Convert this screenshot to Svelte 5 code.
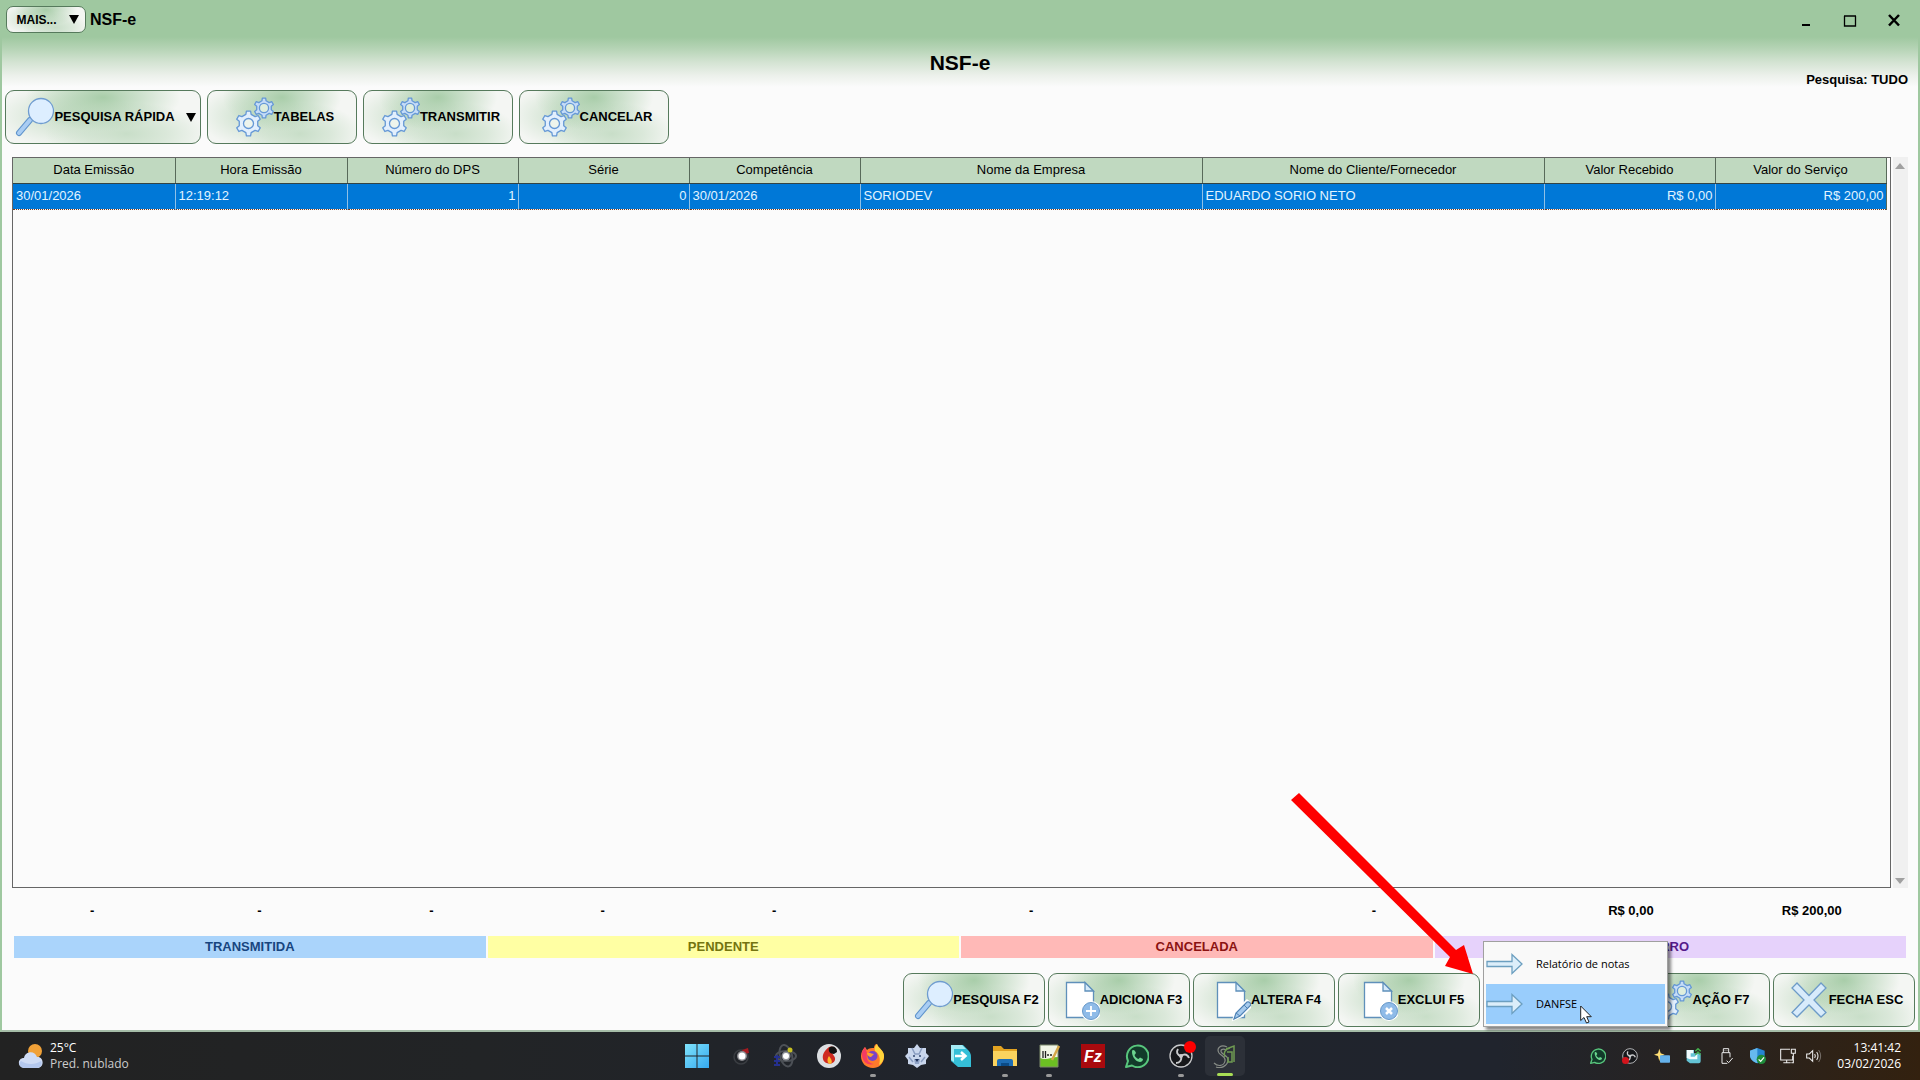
<script>
  const columns = [
    { title: 'Data Emissão', width: 162, value: '30/01/2026', total: '-' },
    { title: 'Hora Emissão', width: 172, value: '12:19:12', total: '-' },
    { title: 'Número do DPS', width: 171, value: '1', total: '-', right: true },
    { title: 'Série', width: 171, value: '0', total: '-', right: true },
    { title: 'Competência', width: 171, value: '30/01/2026', total: '-' },
    { title: 'Nome da Empresa', width: 342, value: 'SORIODEV', total: '-' },
    { title: 'Nome do Cliente/Fornecedor', width: 342, value: 'EDUARDO SORIO NETO', total: '-' },
    { title: 'Valor Recebido', width: 171, value: 'R$ 0,00', total: 'R$ 0,00', right: true },
    { title: 'Valor do Serviço', width: 171, value: 'R$ 200,00', total: 'R$ 200,00', right: true }
  ];

  const states = [
    { label: 'TRANSMITIDA', kind: 'sent' },
    { label: 'PENDENTE', kind: 'pending' },
    { label: 'CANCELADA', kind: 'cancelled' },
    { label: 'ERRO', kind: 'error' }
  ];

  const tools = ['TABELAS', 'TRANSMITIR', 'CANCELAR'];

  const actions = [
    { label: 'PESQUISA F2', icon: 'search' },
    { label: 'ADICIONA F3', icon: 'add' },
    { label: 'ALTERA F4', icon: 'edit' },
    { label: 'EXCLUI F5', icon: 'remove' },
    { label: '', icon: 'menu' },
    { label: 'AÇÃO F7', icon: 'gears' },
    { label: 'FECHA ESC', icon: 'close' }
  ];

  const menu = [
    { label: 'Relatório de notas', active: false },
    { label: 'DANFSE', active: true }
  ];

  const apps = [
    { id: 'start', name: 'Iniciar' },
    { id: 'atom', name: 'Átomo' },
    { id: 'orbit', name: 'Órbita' },
    { id: 'flame', name: 'Chama' },
    { id: 'firefox', name: 'Firefox', running: true },
    { id: 'bear', name: 'Urso' },
    { id: 'remote', name: 'Acesso remoto' },
    { id: 'files', name: 'Arquivos', running: true },
    { id: 'editor', name: 'Editor', running: true },
    { id: 'filezilla', name: 'FileZilla' },
    { id: 'whatsapp', name: 'WhatsApp' },
    { id: 'obs', name: 'OBS', running: true },
    { id: 'sg', name: 'Gestão', active: true }
  ];

  const tray = ['whatsapp', 'obs', 'star', 'sync', 'usb', 'shield', 'network', 'volume'];

  // Outline of a cog: each tooth is a short plateau on the outer radius.
  function gear(cx, cy, outer, inner, teeth) {
    const step = (Math.PI * 2) / teeth;
    const points = [];
    for (let i = 0; i < teeth; i++) {
      const mid = i * step - Math.PI / 2;
      for (const [offset, radius] of [[-0.27, inner], [-0.16, outer], [0.16, outer], [0.27, inner]]) {
        const a = mid + offset * step;
        points.push(`${(cx + Math.cos(a) * radius).toFixed(2)} ${(cy + Math.sin(a) * radius).toFixed(2)}`);
      }
    }
    return `M${points.join('L')}Z`;
  }

  const bigGear = gear(18.5, 28.5, 12.5, 9.5, 6);
  const smallGear = gear(34, 13, 10, 7.5, 6);
  const totalTracks = columns.map((c, i) => `minmax(0, ${i === columns.length - 1 ? 190 : c.width}fr)`).join(' ');
</script>

{#snippet icon(name)}
  <svg class="icon" viewBox="0 0 44 44" aria-hidden="true">
    {#if name === 'search'}
      <path d="M20 25 L9 38" stroke="#5f93cc" stroke-width="6" stroke-linecap="round" />
      <path d="M20 25 L9 38" stroke="#a9cdf3" stroke-width="4" stroke-linecap="round" />
      <circle cx="31" cy="16" r="12.5" fill="#ddeeff" stroke="#6f9cd0" stroke-width="1.3" />
    {:else if name === 'gears'}
      <path d={smallGear} fill="#c5dcf8" stroke="#6598d6" stroke-width="1.3" stroke-linejoin="round" />
      <circle cx="34" cy="13" r="4.6" fill="#dfeedd" stroke="#6598d6" stroke-width="1.3" />
      <path d={bigGear} fill="#e2effd" stroke="#6598d6" stroke-width="1.3" stroke-linejoin="round" />
      <circle cx="18.5" cy="28.5" r="5" fill="#eef4ec" stroke="#6598d6" stroke-width="1.3" />
    {:else if name === 'close'}
      <path d="M12 5 L24 17.5 L36 5 L41 10 L29 22 L41 34.500 L36 39 L24 27 L12 39 L7 34.500 L19 22 L7 10 Z" fill="#d8ebfb" stroke="#6d9bc8" stroke-width="1.3" />
    {:else}
      <path d="M10.500 4.500 H29 L37.500 13 V39.500 H10.500 Z" fill="#fff" stroke="#5f90ba" stroke-width="1.3" />
      <path d="M29 4.500 V13 H37.500 Z" fill="#d6eafa" stroke="#5f90ba" stroke-width="1.3" />
      {#if name === 'edit'}
        <path d="M27 41 L29 34 L40 23 L45 27 L34 38 Z" fill="#fff" stroke="#fff" stroke-width="3" />
        <path d="M27 41 L29 35 L40 24 Q43 23 44 27 L33 38 Z" fill="#a7cbee" stroke="#4f83b5" stroke-width="1.2" />
        <path d="M29 35 L33 38 M37 27 L41 31" stroke="#4f83b5" />
      {:else}
        <circle cx="35" cy="33" r="10" fill="#fff" />
        <circle cx="35" cy="33" r="8.5" fill="#8fbbe8" stroke="#6799c9" />
        {#if name === 'add'}
          <path d="M35 28 V38 M30 33 H40" stroke="#fff" stroke-width="1.8" />
        {:else}
          <path d="M32 30 L38 36 M38 30 L32 36" stroke="#fff" stroke-width="2.5" />
        {/if}
      {/if}
    {/if}
  </svg>
{/snippet}

{#snippet glyph(id)}
  <svg class="glyph" viewBox="0 0 24 24" fill="none" aria-hidden="true">
    {#if id === 'start'}
      <defs>
        <linearGradient id="win" x1="0" y1="0" x2="1" y2="1" gradientUnits="objectBoundingBox">
          <stop offset="0" stop-color="#7fe3fb" /><stop offset="1" stop-color="#35a8f0" />
        </linearGradient>
      </defs>
      <path d="M0 0H11.500V11.500H0ZM12.500 0H24V11.500H12.500ZM0 12.500H11.500V24H0ZM12.500 12.500H24V24H12.500Z" fill="url(#win)" />
    {:else if id === 'atom'}
      <circle cx="12" cy="13" r="7" stroke="#3a3d42" stroke-width="1.5" />
      <path d="M13 6 L19 4 L20 9 L15 10Z" fill="#a51a20" />
      <circle cx="13" cy="12" r="5" fill="#8b8b90" /><circle cx="13" cy="12" r="3.500" fill="#fff" />
    {:else if id === 'orbit'}
      <ellipse cx="13" cy="12" rx="6" ry="11" stroke="#4c5056" stroke-width="2" transform="rotate(-15 12 12)" />
      <ellipse cx="13" cy="12" rx="10" ry="5" stroke="#4c5056" stroke-width="2" />
      <path d="M1 13H7M1 17H7M1 21H7M4 11V22" stroke="#25308e" stroke-width="2" />
      <circle cx="13" cy="12" r="4.500" fill="#8f9297" /><circle cx="13" cy="12" r="3" fill="#fff" />
      <circle cx="17" cy="6" r="2.500" fill="#c7c022" />
    {:else if id === 'flame'}
      <circle cx="12" cy="12" r="12" fill="#dcdfe2" />
      <path d="M12 3 C7 7 5 11 6 15 C7 20 16 22 18 16 C19 12 14 10 15 7 L20 6 C17 2 14 2 12 3Z" fill="#cf2a20" />
      <path d="M12 4 C15 1 20 3 20 8 L17 10 C13 10 11 7 12 4Z" fill="#111" />
      <path d="M12 12 C9 16 11 20 13 20 C16 19 15 16 12 12Z" fill="#ffb52b" />
    {:else if id === 'firefox'}
      <path d="M12 24 C5 24 0 19 0 12 C0 8 2 5 4 3 L6 6 C8 4 11 4 13 4 C13 2 14 0 16 0 C17 4 24 7 23 14 C22 20 18 24 12 24Z" fill="#ff7a2b" />
      <path d="M16 0 C17 4 24 7 23 13 C22 18 20 20 18 21 C20 15 18 9 14 7 C13 4 14 2 16 0Z" fill="#ffd43a" />
      <path d="M1 8 C0 18 7 22 13 20 C6 19 5 14 6 9 L4 3Z" fill="#f43b62" />
      <circle cx="11.500" cy="12" r="5" fill="#7a43c9" />
      <path d="M6 9 C9 8 11 10 13 10 L10 13 C8 13 6 11 6 9Z" fill="#ffa32b" />
    {:else if id === 'bear'}
      <path d="M12 0 L15 4 L21 4 L21 9 L24 12 L21 16 L21 20 L16 21 L12 24 L8 21 L3 20 L3 16 L0 12 L3 9 L3 4 L9 4Z" fill="#c9d6ec" />
      <path d="M7 4 L10 10 H14 L17 4 M4 13 L8 18 M20 13 L16 18" stroke="#8a9dc0" stroke-width="1.500" />
      <circle cx="9" cy="12" r="1" fill="#31466f" /><circle cx="15" cy="12" r="1" fill="#31466f" />
      <path d="M9 15H15L14 20H10Z" fill="#8fa3c6" /><path d="M10 15H14L12 18Z" fill="#20335c" />
    {:else if id === 'remote'}
      <path d="M2 1 H14 L18 5 Q22 8 22 13 V23 H9 L2 17Z" fill="#35bfd8" />
      <path d="M2 1 H13 L17 5 H5 V18 L2 16Z" fill="#a5ebf5" />
      <path d="M6 12H15M12 8 L16.500 12 L12 16" stroke="#fff" stroke-width="2.500" />
    {:else if id === 'files'}
      <path d="M0 2 H8 L11 5 H24 V22 H0Z" fill="#e3a321" /><path d="M0 7 H24 V22 H0Z" fill="#fbd35e" />
      <path d="M4 22 V17 Q4 15 6 15 H18 Q20 15 20 17 V22Z" fill="#1d6db5" /><path d="M8 22 V19 H16 V22Z" fill="#0b4b87" />
    {:else if id === 'editor'}
      <path d="M3 1 H21 V23 H3Z" fill="#f1f5e6" /><path d="M3 14 C9 17 14 13 21 13 V23 H3Z" fill="#6cc023" />
      <path d="M3 1 H21 V23 H3Z" stroke="#7c8a6a" /><path d="M6 7V14M8.500 7V14M10 11H12M13 11H15" stroke="#222" stroke-width="1.300" />
      <path d="M22 2 L15 16" stroke="#d6a747" stroke-width="2.500" />
    {:else if id === 'filezilla'}
      <rect width="24" height="24" fill="#a90a0e" />
      <text x="3" y="18" class="fz">Fz</text>
    {:else if id === 'whatsapp'}
      <path d="M1 23 L3 17 A10.800 10.800 0 1 1 7 21.500Z" fill="#123b2a" stroke="#58c67d" stroke-width="2" stroke-linejoin="round" />
      <path d="M7 8 C7 5 9 6 10 7 L11 9 L9.500 11 C10 13 12 14.500 13.500 15 L15 13.500 L18 15 C18 18 15 18.500 13 17.500 C10 16.500 7 12 7 8Z" fill="#6ad58e" />
    {:else if id === 'obs'}
      <circle cx="12" cy="12" r="11" fill="#17181b" stroke="#c9cacc" stroke-width="1.300" />
      <path d="M12 12 C8 11 7 8 9 5 M12 12 C16 9 19 11 20 14 M12 12 C13 16 11 19 7 19" stroke="#c9cacc" stroke-width="2" />
      <circle cx="12" cy="12" r="2" fill="#c9cacc" />
    {:else if id === 'sg'}
      <path d="M14 3 C8 0 3 4 6 9 C8 12 13 12 12 17 C11 22 5 23 1 19 M13 6 C10 4 6 6 9 9 C12 12 16 12 15 17 C14 22 8 25 3 23" stroke="#878c86" stroke-width="1.200" />
      <path d="M17 4 C12 5 10 9 12 13 M14 8 H19 V18 H15 V13 M13 5 L21 2 V18" stroke="#6f9a52" stroke-width="1.500" />
    {:else if id === 'star'}
      <path d="M8 1 L10 8 L16 10 L10 12 L8 20 L6 12 L0 10 L6 8Z" fill="#ffdf75" /><rect x="9" y="11" width="15" height="11" rx="1" fill="#65b1ea" />
    {:else if id === 'sync'}
      <path d="M1 3 H12 V8 H22 V20 Q22 23 19 23 H6 L1 19Z" fill="#64c3d5" /><path d="M1 3 H11 V8 H7 V13 H13 L17 9 V17 H6 L1 15Z" fill="#f2fbfd" />
      <path d="M14 5 L18 1 L22 5 M14 10 L18 6 L22 10" stroke="#43ad4d" stroke-width="2" />
    {:else if id === 'usb'}
      <path d="M8 7 V1 H16 V7 M6 7 H18 V14 M6 7 V23 H14 M13 19 L16 22 L22 15 M10 4H11M13 4H14" stroke="#e8e8e8" stroke-width="1.500" />
    {:else if id === 'shield'}
      <path d="M11 0 L22 4 V11 C22 17 17 21 11 23 C5 21 0 17 0 11 V4Z" fill="#2685d2" /><path d="M11 0 V23 C5 21 0 17 0 11 V4Z" fill="#66b9ee" />
      <circle cx="17" cy="17" r="7" fill="#1e8c3a" /><path d="M13 17 L16 20 L21 14" stroke="#fff" stroke-width="1.800" />
    {:else if id === 'network'}
      <path d="M15 2 H1 V18 H19 V12 M10 18 V22 M5 22 H16 M17 2 H23 V8 H17Z M20 8 V22 H17" stroke="#ececec" stroke-width="1.600" />
    {:else if id === 'volume'}
      <path d="M1 9 H5 L10 4 V20 L5 15 H1Z M13 9 Q15 12 13 15 M16 6 Q20 12 16 18" stroke="#ececec" stroke-width="1.600" />
      <path d="M19 3 Q25 12 19 21" stroke="#77706a" stroke-width="1.500" />
    {/if}
  </svg>
{/snippet}

<div class="screen">
  <main class="window">
    <header class="titlebar">
      <button class="glossy more">MAIS... <span class="caret"></span></button>
      <span class="caption">NSF-e</span>
      <div class="controls">
        <button aria-label="Minimizar"><svg viewBox="0 0 14 14"><path d="M3 12H11" stroke="#000" stroke-width="2" /></svg></button>
        <button aria-label="Maximizar"><svg viewBox="0 0 14 14"><path d="M1 3H13M1.500 3V13H12.500V3" fill="none" stroke="#000" stroke-width="1.300" /></svg></button>
        <button aria-label="Fechar"><svg viewBox="0 0 14 14"><path d="M2 2 L12 12.500 M12 2 L2 12.500" stroke="#000" stroke-width="2.500" /></svg></button>
      </div>
    </header>

    <div class="heading">
      <h1>NSF-e</h1>
      <p>Pesquisa: TUDO</p>
    </div>

    <nav class="toolbar">
      <button class="glossy quick">{@render icon('search')}<span>PESQUISA RÁPIDA</span><span class="caret"></span></button>
      {#each tools as tool}
        <button class="glossy tool">{@render icon('gears')}<span>{tool}</span></button>
      {/each}
    </nav>

    <section class="grid">
      <div class="sheet">
        <table>
          <colgroup>
            {#each columns as c}<col style:width="{c.width}px" />{/each}
          </colgroup>
          <thead>
            <tr>{#each columns as c}<th scope="col">{c.title}</th>{/each}</tr>
          </thead>
          <tbody>
            <tr>{#each columns as c}<td class:right={c.right}>{c.value}</td>{/each}</tr>
          </tbody>
        </table>
      </div>
      <div class="scroll"><span class="up"></span><span class="down"></span></div>
    </section>

    <div class="totals" style:grid-template-columns={totalTracks}>
      {#each columns as c}<span>{c.total}</span>{/each}
    </div>

    <div class="legend">
      {#each states as s}<span class={s.kind}>{s.label}</span>{/each}
    </div>

    <footer class="actions">
      {#each actions as a}
        {#if a.icon === 'menu'}
          <div class="anchor">
            <button class="glossy action" aria-label="F6"></button>
            <div class="menu" role="menu">
              {#each menu as m}
                <button role="menuitem" class:active={m.active}>
                  <svg viewBox="0 0 38 22" aria-hidden="true"><path d="M1 8.500 H26 V1.500 L36 11 L26 20.500 V13.500 H1Z" fill="#dceefa" stroke="#6c9fc0" stroke-width="1.300" /></svg>
                  {m.label}
                </button>
              {/each}
              <svg class="cursor" viewBox="0 0 12 19" aria-hidden="true"><path d="M.7 1 V15.500 L4 12.500 L6.500 18 L9 17 L6.700 11.700 H11.300Z" fill="#fff" stroke="#222" /></svg>
            </div>
            <svg class="pointer" viewBox="0 0 182 182" aria-hidden="true"><path d="M8 0 L165 157 L173 152 L182 181 L154 173 L159 164 L0 7Z" fill="#fe0000" /></svg>
          </div>
        {:else}
          <button class="glossy action">{@render icon(a.icon)}<span>{a.label}</span></button>
        {/if}
      {/each}
    </footer>
  </main>

  <footer class="taskbar">
    <div class="weather">
      <svg viewBox="0 0 26 28" aria-hidden="true">
        <circle cx="17" cy="9" r="7" fill="#f0a138" />
        <path d="M7 26 C-1 26 -1 16 6 16 C7 9 17 8 19 15 C26 14 27 26 19 26Z" fill="#cfdcf5" />
        <path d="M7 26 C1 26 0 21 3 19 C9 23 17 23 23 19 C25 23 22 26 19 26Z" fill="#b4c8ee" />
      </svg>
      <div><div>25°C</div><div class="dim">Pred. nublado</div></div>
    </div>
    <div class="apps">
      {#each apps as app}
        <button class="app" class:running={app.running} class:active={app.active} aria-label={app.name}>
          {@render glyph(app.id)}
          {#if app.id === 'obs'}<span class="badge"></span>{/if}
        </button>
      {/each}
    </div>
    <div class="tray">
      {#each tray as t}
        <span class="item {t}">{@render glyph(t)}{#if t === 'obs'}<span class="dot"></span>{/if}</span>
      {/each}
      <div class="clock"><div>13:41:42</div><div>03/02/2026</div></div>
    </div>
  </footer>
</div>

<style>
  :global(body) { margin: 0; }
  * { box-sizing: border-box; }
  button { font: inherit; color: inherit; padding: 0; margin: 0; border: 0; background: none; }
  h1, p { margin: 0; }
  .screen { min-height: 100vh; display: flex; flex-direction: column; font: 13px/16px "Liberation Sans", Arial, sans-serif; color: #000; }
  .window {
    flex: 1; display: flex; flex-direction: column;
    border: solid #9fc8a0; border-width: 0 2px 2px; border-bottom-color: #a6bda8;
    background: linear-gradient(#9fc8a0 0, #9fc8a0 37px, #b4d3b4 48px, #d3e3d2 62px, #ebf0ea 75px, #fbfbfb 87px);
  }

  .glossy {
    display: flex; align-items: center; justify-content: center;
    border: 1px solid #567a5c; border-radius: 9px;
    font-weight: bold; white-space: nowrap;
    background:
      radial-gradient(ellipse 40% 65% at 50% 12%, #9fc8a0e0 0, #9fc8a088 40%, #9fc8a000 100%),
      radial-gradient(ellipse 42% 60% at 62% 82%, #bdd8bdcc 0, #bdd8bd77 50%, #bdd8bd00 100%),
      radial-gradient(ellipse 36% 60% at 30% 48%, #b4d3b4aa 0, #b4d3b400 100%),
      #f4f6f3;
  }
  .icon { width: 44px; height: 44px; flex: none; fill: none; }
  .caret { border: 5px solid transparent; border-top: 9px solid #000; border-bottom: 0; }

  .titlebar { height: 38px; padding: 6px 2px 5px 4px; display: flex; align-items: flex-start; }
  .more { width: 80px; height: 27px; gap: 12px; padding-left: 3px; font-size: 12px; border-radius: 7px; }
  .caption { font-weight: bold; font-size: 16px; line-height: 27px; padding-left: 4px; }
  .controls { margin-left: auto; display: flex; }
  .controls button { width: 44px; height: 28px; display: grid; place-items: center; }
  .controls svg { width: 14px; height: 14px; }

  .heading { height: 52px; padding: 0 10px; display: grid; grid-template-columns: 1fr auto 1fr; font-weight: bold; }
  .heading h1 { grid-column: 2; font-size: 21px; line-height: 50px; }
  .heading p { justify-self: end; align-self: end; padding-bottom: 2px; }

  .toolbar { display: flex; gap: 6px; padding-left: 3px; }
  .toolbar .glossy { height: 54px; }
  .quick { width: 196px; }
  .quick .caret { margin-left: 11px; }
  .tool { width: 150px; }

  .grid { flex: 1; display: flex; margin: 13px 10px 0; min-height: 200px; }
  .sheet { flex: 1; border: 1px solid #666; padding-right: 3px; background: #fbfbfb; }
  table { width: 100%; table-layout: fixed; border-collapse: collapse; }
  th { height: 25px; padding: 0; font-weight: normal; background: #c0d9c0; border-right: 1px solid #586a5a; border-bottom: 1px solid #344; }
  td { height: 26px; padding: 0 2px 0 3px; color: #e2f4ff; background: #0078d7; border-right: 1px solid #8fc0e6; border-bottom: 1px dotted #7a3c1c; }
  td:last-child { border-right-color: #586a5a; }
  .right { text-align: right; }
  .scroll { width: 17px; margin-left: 2px; padding: 6px 0 4px; background: #f0f0f0; display: flex; flex-direction: column; align-items: center; justify-content: space-between; }
  .up, .down { border: 5px solid transparent; }
  .up { border-bottom: 6px solid #a0a0a0; border-top: 0; }
  .down { border-top: 6px solid #a0a0a0; border-bottom: 0; }

  .totals { display: grid; margin: 15px 11px 0 9px; text-align: center; font-weight: bold; }
  .legend { display: grid; grid-template-columns: repeat(4, 1fr); gap: 2px; margin: 17px 12px 15px; text-align: center; font-weight: bold; line-height: 22px; }
  .sent { background: #aad4fb; color: #17457f; }
  .pending { background: #ffffa3; color: #747410; }
  .cancelled { background: #ffb9b7; color: #8b1212; }
  .error { background: #e6d2fb; color: #551a8b; }

  .actions { display: flex; justify-content: flex-end; gap: 3px; padding: 0 3px 3px; }
  .action { width: 142px; height: 54px; }
  .anchor { position: relative; }
  .menu {
    position: absolute; left: 0; bottom: 0; z-index: 2; width: 185px; padding: 2px; background: #f9f9f9;
    border: 1px solid #a0a0a0; box-shadow: 3px 3px 3px #0007; font: 11px/16px "Open Sans", "Noto Sans", sans-serif;
  }
  .menu button { width: 100%; height: 40px; display: flex; align-items: center; gap: 12px; text-align: left; white-space: nowrap; }
  .menu button.active { background: #99cdfc; }
  .menu button svg { width: 38px; height: 22px; }
  .cursor { position: absolute; left: 96px; top: 63px; width: 12px; height: 19px; }
  .pointer { position: absolute; right: 152px; bottom: 52px; z-index: 1; width: 182px; height: 182px; pointer-events: none; }

  .taskbar {
    height: 48px; display: grid; grid-template-columns: 1fr auto 1fr; align-items: center; color: #fff;
    font: 12px/16px "Open Sans", "Noto Sans", sans-serif;
    background: linear-gradient(90deg, #222 0, #222426 25%, #20242c 50%, #20242d 78%, #29231f 90%, #33210f 100%);
  }
  .weather { display: flex; align-items: center; gap: 6px; padding-left: 18px; }
  .weather svg { width: 26px; height: 28px; }
  .dim { color: #ccc; }
  .apps { display: flex; padding-left: 2px; }
  .app { position: relative; width: 44px; height: 48px; display: grid; place-items: center; }
  .glyph { width: 24px; height: 24px; }
  .app.running::after { content: ""; position: absolute; bottom: 3px; left: 19px; width: 6px; height: 3px; border-radius: 2px; background: #999; }
  .app.active { height: 40px; margin: 4px 2px; width: 40px; border-radius: 5px; background: #2c3038; }
  .app.active::after { content: ""; position: absolute; bottom: 0; left: 12px; width: 16px; height: 3px; border-radius: 2px; background: #a8dd55; }
  .badge { position: absolute; left: 25px; top: 9px; width: 12px; height: 12px; border-radius: 50%; background: #fe0000; }
  .fz { font: italic bold 16px "Liberation Sans", sans-serif; fill: #fff; }
  .tray { display: flex; align-items: center; justify-content: flex-end; padding-right: 19px; }
  .item { position: relative; width: 32px; display: grid; place-items: center; }
  .item .glyph { width: 16px; height: 16px; }
  .item.volume { width: 24px; }
  .item.network { width: 28px; }
  .dot { position: absolute; left: 8px; bottom: 0; width: 7px; height: 7px; border-radius: 50%; background: #d3141c; }
  .clock { text-align: right; margin-left: 11px; }
</style>
